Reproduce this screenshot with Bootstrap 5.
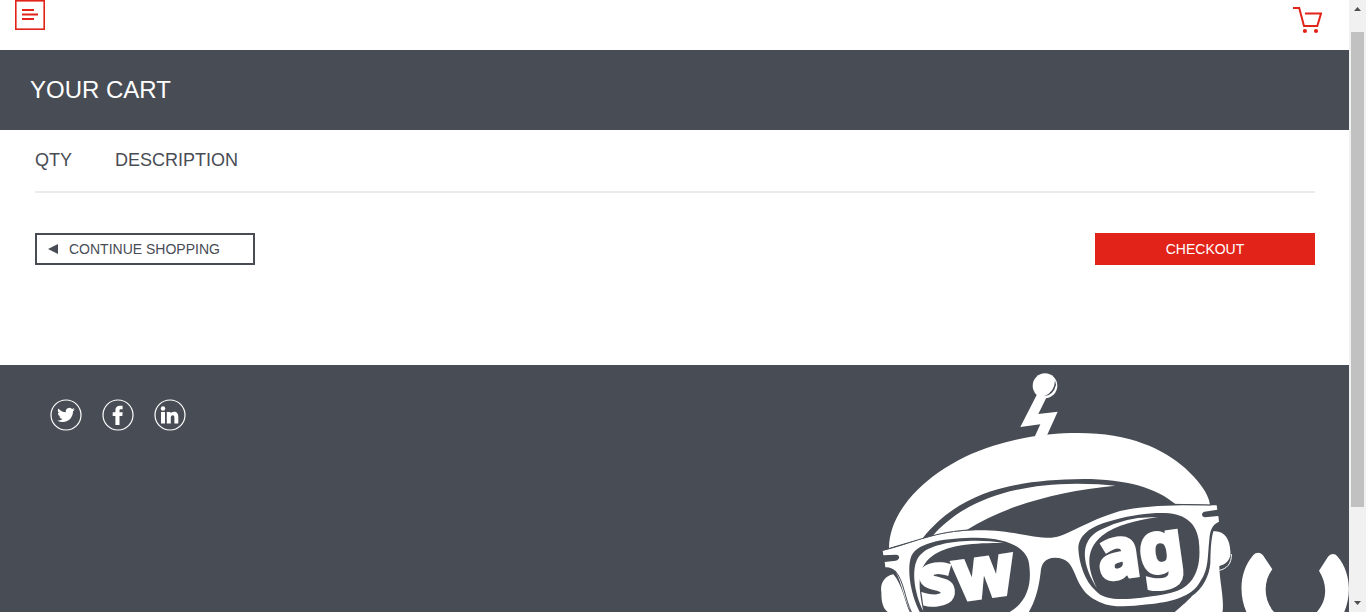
<!DOCTYPE html>
<html lang="en">
<head>
<meta charset="utf-8">
<meta name="viewport" content="width=device-width, initial-scale=1">
<title>Your Cart</title>
<link href="https://cdn.jsdelivr.net/npm/bootstrap@5.3.0/dist/css/bootstrap.min.css" rel="stylesheet">
<style>
  :root { --slate: #484c55; --swag-red: #e2231a; }
  body { font-family: "Liberation Sans", Arial, sans-serif; color: var(--slate); background: #fff; }
  .site-header { height: 50px; padding: 0 27px 0 15px; }
  .icon-btn { line-height: 0; }
  .cart-link { margin-top: 6px; line-height: 0; }
  .title-band { background: var(--slate); padding: 22px 30px; }
  .title-band h1 { font-size: 24px; line-height: 36px; }
  .cart-body { padding: 0 34px 100px 35px; }
  .cart-head { border-bottom: 2px solid #ebebeb; margin-bottom: 40px; }
  .cart-head th { font-size: 18px; line-height: 27px; padding: 17px 0; font-weight: 400; }
  .qty-col { width: 80px; }
  .cart-btn { width: 220px; height: 32px; border-radius: 0; font-size: 14px; line-height: 20px; padding: 0 10px; border-width: 2px; }
  .btn-continue { border-color: var(--slate); color: var(--slate); background: #fff; }
  .btn-checkout, .btn-checkout:hover { background: var(--swag-red); border-color: var(--swag-red); color: #fff; }
  .site-footer { background: var(--slate); }
  .social { padding: 34px 50px; gap: 20px; }
  .social a { line-height: 0; }
  .scroll-track { width: 17px; background: #f1f1f1; }
  .scroll-track button { height: 17px; line-height: 0; }
  .scroll-space { padding: 15px 2px 0; }
  .scroll-thumb { background: #c1c1c1; height: 84.4%; }
  .robot text { font-family: "Noto Sans", "Open Sans", sans-serif; font-weight: 700; stroke: #fff; stroke-width: 13px; }
</style>
</head>
<body class="d-flex vh-100 overflow-hidden">
<div class="d-flex flex-column flex-grow-1 overflow-hidden">
  <header class="site-header d-flex justify-content-between align-items-start flex-shrink-0">
    <button type="button" class="icon-btn border-0 bg-transparent p-0" aria-label="Menu">
      <svg width="30" height="30" viewBox="0 0 30 30" fill="none" stroke="#e2231a">
        <rect x=".8" y=".8" width="28.4" height="28.4" stroke-width="1.6"/>
        <path d="M7 10h12M7 14.5h16M7 19h12" stroke-width="1.8"/>
      </svg>
    </button>
    <a href="#" class="cart-link" aria-label="Cart">
      <svg width="30" height="28" viewBox="0 0 30 28" fill="none" stroke="#e2231a" stroke-width="2">
        <path d="M1 2h6.200L12 20h13.300L29 7.600H13"/>
        <g fill="#e2231a" stroke="none"><circle cx="12.900" cy="25" r="2.100"/><circle cx="24" cy="25" r="2.100"/></g>
      </svg>
    </a>
  </header>

  <section class="title-band flex-shrink-0">
    <h1 class="m-0 fw-normal text-white">YOUR CART</h1>
  </section>

  <main class="cart-body flex-shrink-0">
    <div class="cart-head">
      <table class="w-100">
        <thead><tr><th class="qty-col" scope="col">QTY</th><th scope="col">DESCRIPTION</th></tr></thead>
      </table>
    </div>
    <div class="d-flex justify-content-between">
      <button type="button" class="btn cart-btn btn-continue d-flex align-items-center gap-2">
        <svg width="14" height="12" viewBox="0 0 14 12" aria-hidden="true"><path d="M1 6L11 1v10z" fill="#484c55"/></svg>
        CONTINUE SHOPPING
      </button>
      <button type="button" class="btn cart-btn btn-checkout">CHECKOUT</button>
    </div>
  </main>

  <footer class="site-footer d-flex justify-content-between align-items-start flex-grow-1 overflow-hidden">
    <nav class="social d-flex" aria-label="Social links">
      <a href="#" aria-label="Twitter">
        <svg width="32" height="32" viewBox="0 0 32 32" fill="#fff">
          <circle cx="16" cy="16" r="15" fill="none" stroke="#fff" stroke-width="1.200"/>
          <path transform="translate(7.200 6.600) scale(1.100)" d="M5.026 15c6.038 0 9.341-5.003 9.341-9.334 0-.14 0-.282-.006-.422A6.685 6.685 0 0 0 16 3.542a6.658 6.658 0 0 1-1.889.518 3.301 3.301 0 0 0 1.447-1.817 6.533 6.533 0 0 1-2.087.793A3.286 3.286 0 0 0 7.875 6.03a9.325 9.325 0 0 1-6.767-3.429 3.289 3.289 0 0 0 1.018 4.382A3.323 3.323 0 0 1 .64 6.575v.045a3.288 3.288 0 0 0 2.632 3.218 3.203 3.203 0 0 1-.865.115 3.23 3.23 0 0 1-.614-.057 3.283 3.283 0 0 0 3.067 2.277A6.588 6.588 0 0 1 .78 13.58a6.32 6.32 0 0 1-.78-.045A9.344 9.344 0 0 0 5.026 15z"/>
        </svg>
      </a>
      <a href="#" aria-label="Facebook">
        <svg width="32" height="32" viewBox="0 0 32 32" fill="#fff">
          <circle cx="16" cy="16" r="15" fill="none" stroke="#fff" stroke-width="1.200"/>
          <path d="M13.400 26V16.900H10.700V13.200h2.700v-2c0-3 1.600-4.500 4.400-4.500h2.800v3.500h-1.700c-1.100 0-1.400.5-1.400 1.400v1.600h3.200l-.4 3.700h-2.800V26z"/>
        </svg>
      </a>
      <a href="#" aria-label="LinkedIn">
        <svg width="32" height="32" viewBox="0 0 32 32" fill="#fff">
          <circle cx="16" cy="16" r="15" fill="none" stroke="#fff" stroke-width="1.200"/>
          <circle cx="9" cy="9.500" r="2.200"/><path d="M7 13h4v11.500H7zM12.800 13h3.700v1.600c.7-1.200 1.800-1.900 3.400-1.900 3.200 0 4.400 2 4.400 5.200v6.600h-3.900v-5.700c0-1.600-.4-2.500-1.700-2.500s-1.900.9-1.900 2.500v5.700h-4z"/>
        </svg>
      </a>
    </nav>

    <!-- Mascot; the lower part runs below the fold -->
    <svg class="robot flex-shrink-0" width="479" height="247" viewBox="0 0 1437 741" fill="#fff" role="img" aria-label="Swag robot">
      <!-- antenna -->
      <circle cx="525" cy="62" r="37"/>
      <path d="M500 90L451 186L511 178L492 220H527L563 140L505 147L533 90z"/>
      <path d="M555 46Q554 82 522 94Q550 92 558 60z" fill="#484c55"/>
      <!-- helmet and forehead highlight -->
      <path d="M57 549C58 420 200 295 370 242C460 214 550 204 625 204C780 204 880 252 945 309C985 346 1016 385 1020 419L916 417C860 370 770 342 640 342C410 344 260 390 157 521Q100 535 57 549z"/>
      <path d="M188 512C260 430 390 357 620 356Q690 356 736 362C560 378 400 425 290 495Q235 502 188 512z"/>
      <!-- ears and cheek -->
      <path d="M70 628C42 633 30 658 34 681C34 715 40 735 60 745H121C104 712 98 660 70 628z"/>
      <path d="M1030 499C1061 495 1080 521 1081 558C1084 584 1067 598 1048 603C1049 655 1064 702 1057 745H910C936 722 954 708 965 694C998 672 1018 633 1021 595C1022 560 1022 530 1030 499z"/>
      <path d="M1084 567C1086 596 1069 612 1048 616" fill="none" stroke="#fff" stroke-width="3"/>
      <!-- spectacle frame with lens openings -->
      <path fill-rule="evenodd" d="M38 557C125 537 190 499 315 496C425 494 480 519 545 518C590 515 650 467 750 438C850 417 945 421 1040 421L1042 434L1003 440C993 444 994 455 1005 457L1045 453L1047 470C1024 480 1020 499 1018 524C1012 575 1017 610 992 647C966 699 895 711 835 718C770 726 725 727 694 713C645 695 629 662 614 625C603 596 590 579 555 578C524 579 514 596 512 622C506 672 495 712 474 745H125C101 702 96 654 76 618Q62 605 46 607L44 591L77 587C91 585 91 568 77 569L40 571z
        M151 745C120 685 110 610 124 573C145 529 230 519 319 518C425 519 476 555 478 604C485 660 471 715 412 745z
        M625 552C625 503 675 479 732 465C790 449 835 443 885 444C951 446 980 481 986 524C992 575 988 618 960 652C933 683 885 690 815 698C748 706 700 704 677 677C644 649 627 593 625 552z"/>
      <path d="M75 617C103 649 103 700 126 745M38 556C125 536 190 498 315 494M912 418L1024 420" fill="none" stroke="#484c55" stroke-width="3"/>
      <!-- lens highlights -->
      <path d="M160 738C135 692 115 595 157 564C195 530 310 519 400 534C300 533 230 542 188 572C133 610 149 680 160 738z"/>
      <path d="M681 670C640 605 622 530 690 495Q770 452 864 457C800 465 740 480 696 512C640 558 656 617 681 670z"/>
      <!-- lens lettering -->
      <text transform="translate(157 722) rotate(-8)" font-size="210">sw</text>
      <text transform="translate(692 646) rotate(-8)" font-size="210">ag</text>
      <!-- raised claw -->
      <path d="M1165 563Q1174 563 1179 571L1207 613C1178 650 1180 710 1216 745H1131C1106 690 1107 620 1150 570Q1156 563 1165 563zM1388 567Q1397 567 1402 574C1442 621 1446 690 1421 745H1337C1372 710 1374 660 1347 617L1374 575Q1380 567 1388 567z"/>
    </svg>
  </footer>
</div>

<aside class="scroll-track d-flex flex-column flex-shrink-0" aria-label="Scroll">
  <button type="button" class="border-0 bg-transparent p-0" aria-label="Scroll up"><svg width="17" height="17" viewBox="0 0 17 17"><path d="M5 11L8.500 7L12 11z" fill="#505050"/></svg></button>
  <div class="scroll-space flex-grow-1"><div class="scroll-thumb"></div></div>
  <button type="button" class="border-0 bg-transparent p-0" aria-label="Scroll down"><svg width="17" height="17" viewBox="0 0 17 17"><path d="M5 6L8.500 10L12 6z" fill="#505050"/></svg></button>
</aside>
<script src="https://cdn.jsdelivr.net/npm/bootstrap@5.3.0/dist/js/bootstrap.bundle.min.js"></script>
</body>
</html>
